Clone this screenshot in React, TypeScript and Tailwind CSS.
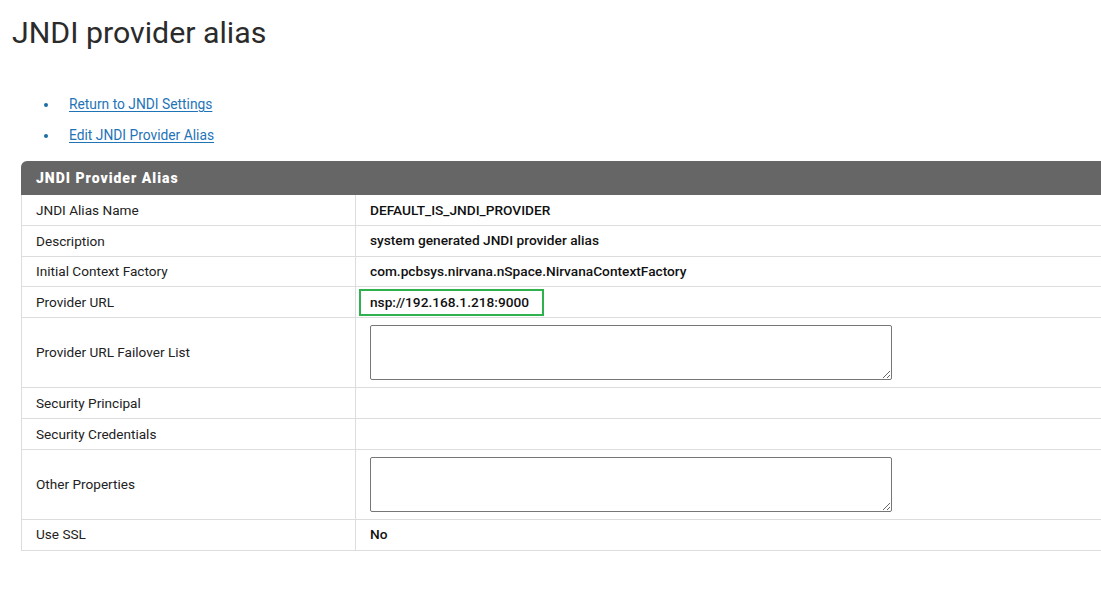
import React from "react";

const rows: { label: string; value?: string; kind: "text" | "textarea" | "empty" | "highlight" }[] = [
  { label: "JNDI Alias Name", value: "DEFAULT_IS_JNDI_PROVIDER", kind: "text" },
  { label: "Description", value: "system generated JNDI provider alias", kind: "text" },
  { label: "Initial Context Factory", value: "com.pcbsys.nirvana.nSpace.NirvanaContextFactory", kind: "text" },
  { label: "Provider URL", value: "nsp://192.168.1.218:9000", kind: "highlight" },
  { label: "Provider URL Failover List", kind: "textarea" },
  { label: "Security Principal", kind: "empty" },
  { label: "Security Credentials", kind: "empty" },
  { label: "Other Properties", kind: "textarea" },
  { label: "Use SSL", value: "No", kind: "text" },
];

export default function App() {
  return (
    <div
      className="w-[1101px] h-[592px] overflow-hidden bg-white text-[#333]"
      style={{ fontFamily: "Roboto, 'Liberation Sans', sans-serif" }}
    >
      <h1 className="pl-[12px] pt-[14px] text-[30.3px] leading-[38px] font-normal text-[#2b2b2b]">JNDI provider alias</h1>
      <ul className="mt-[44px] pl-[44px] flex flex-col gap-[14px]">
        {["Return to JNDI Settings", "Edit JNDI Provider Alias"].map((t) => (
          <li key={t} className="flex items-center text-[13.8px] leading-[17px]">
            <span className="w-[4px] h-[4px] rounded-full bg-[#1a6ea8] mr-[21px]" />
            <a href="#" className="text-[#1f74b8] underline underline-offset-[2px]">
              {t}
            </a>
          </li>
        ))}
      </ul>
      <div className="ml-[21px] mt-[17px] w-[1120px]">
        <div className="h-[34px] bg-[#666666] rounded-tl-[6px] flex items-center pl-[15px] text-white font-black text-[14px] tracking-[1px]">
          JNDI Provider Alias
        </div>
        <div className="border-l border-[#dddddd]">
          {rows.map((r) => (
            <div
              key={r.label}
              className={`flex border-b border-[#dddddd] ${r.kind === "textarea" ? "h-[70px]" : "h-[30.8px]"}`}
            >
              <div className="w-[334px] shrink-0 border-r border-[#dddddd] pl-[14px] flex items-center text-[13.6px] text-[#222]">
                {r.label}
              </div>
              <div className="flex-1 flex items-center text-[13.7px] font-medium text-[#111]">
                {r.kind === "text" && <span className="pl-[14px]">{r.value}</span>}
                {r.kind === "highlight" && (
                  <span className="ml-[3px] h-[27px] w-[185px] border-2 border-[#2fb14d] flex items-center pl-[9px]">
                    {r.value}
                  </span>
                )}
                {r.kind === "textarea" && (
                  <textarea className="ml-[14px] w-[522px] h-[55px] border border-[#767676] rounded-[2px] resize" />
                )}
              </div>
            </div>
          ))}
        </div>
      </div>
    </div>
  );
}
